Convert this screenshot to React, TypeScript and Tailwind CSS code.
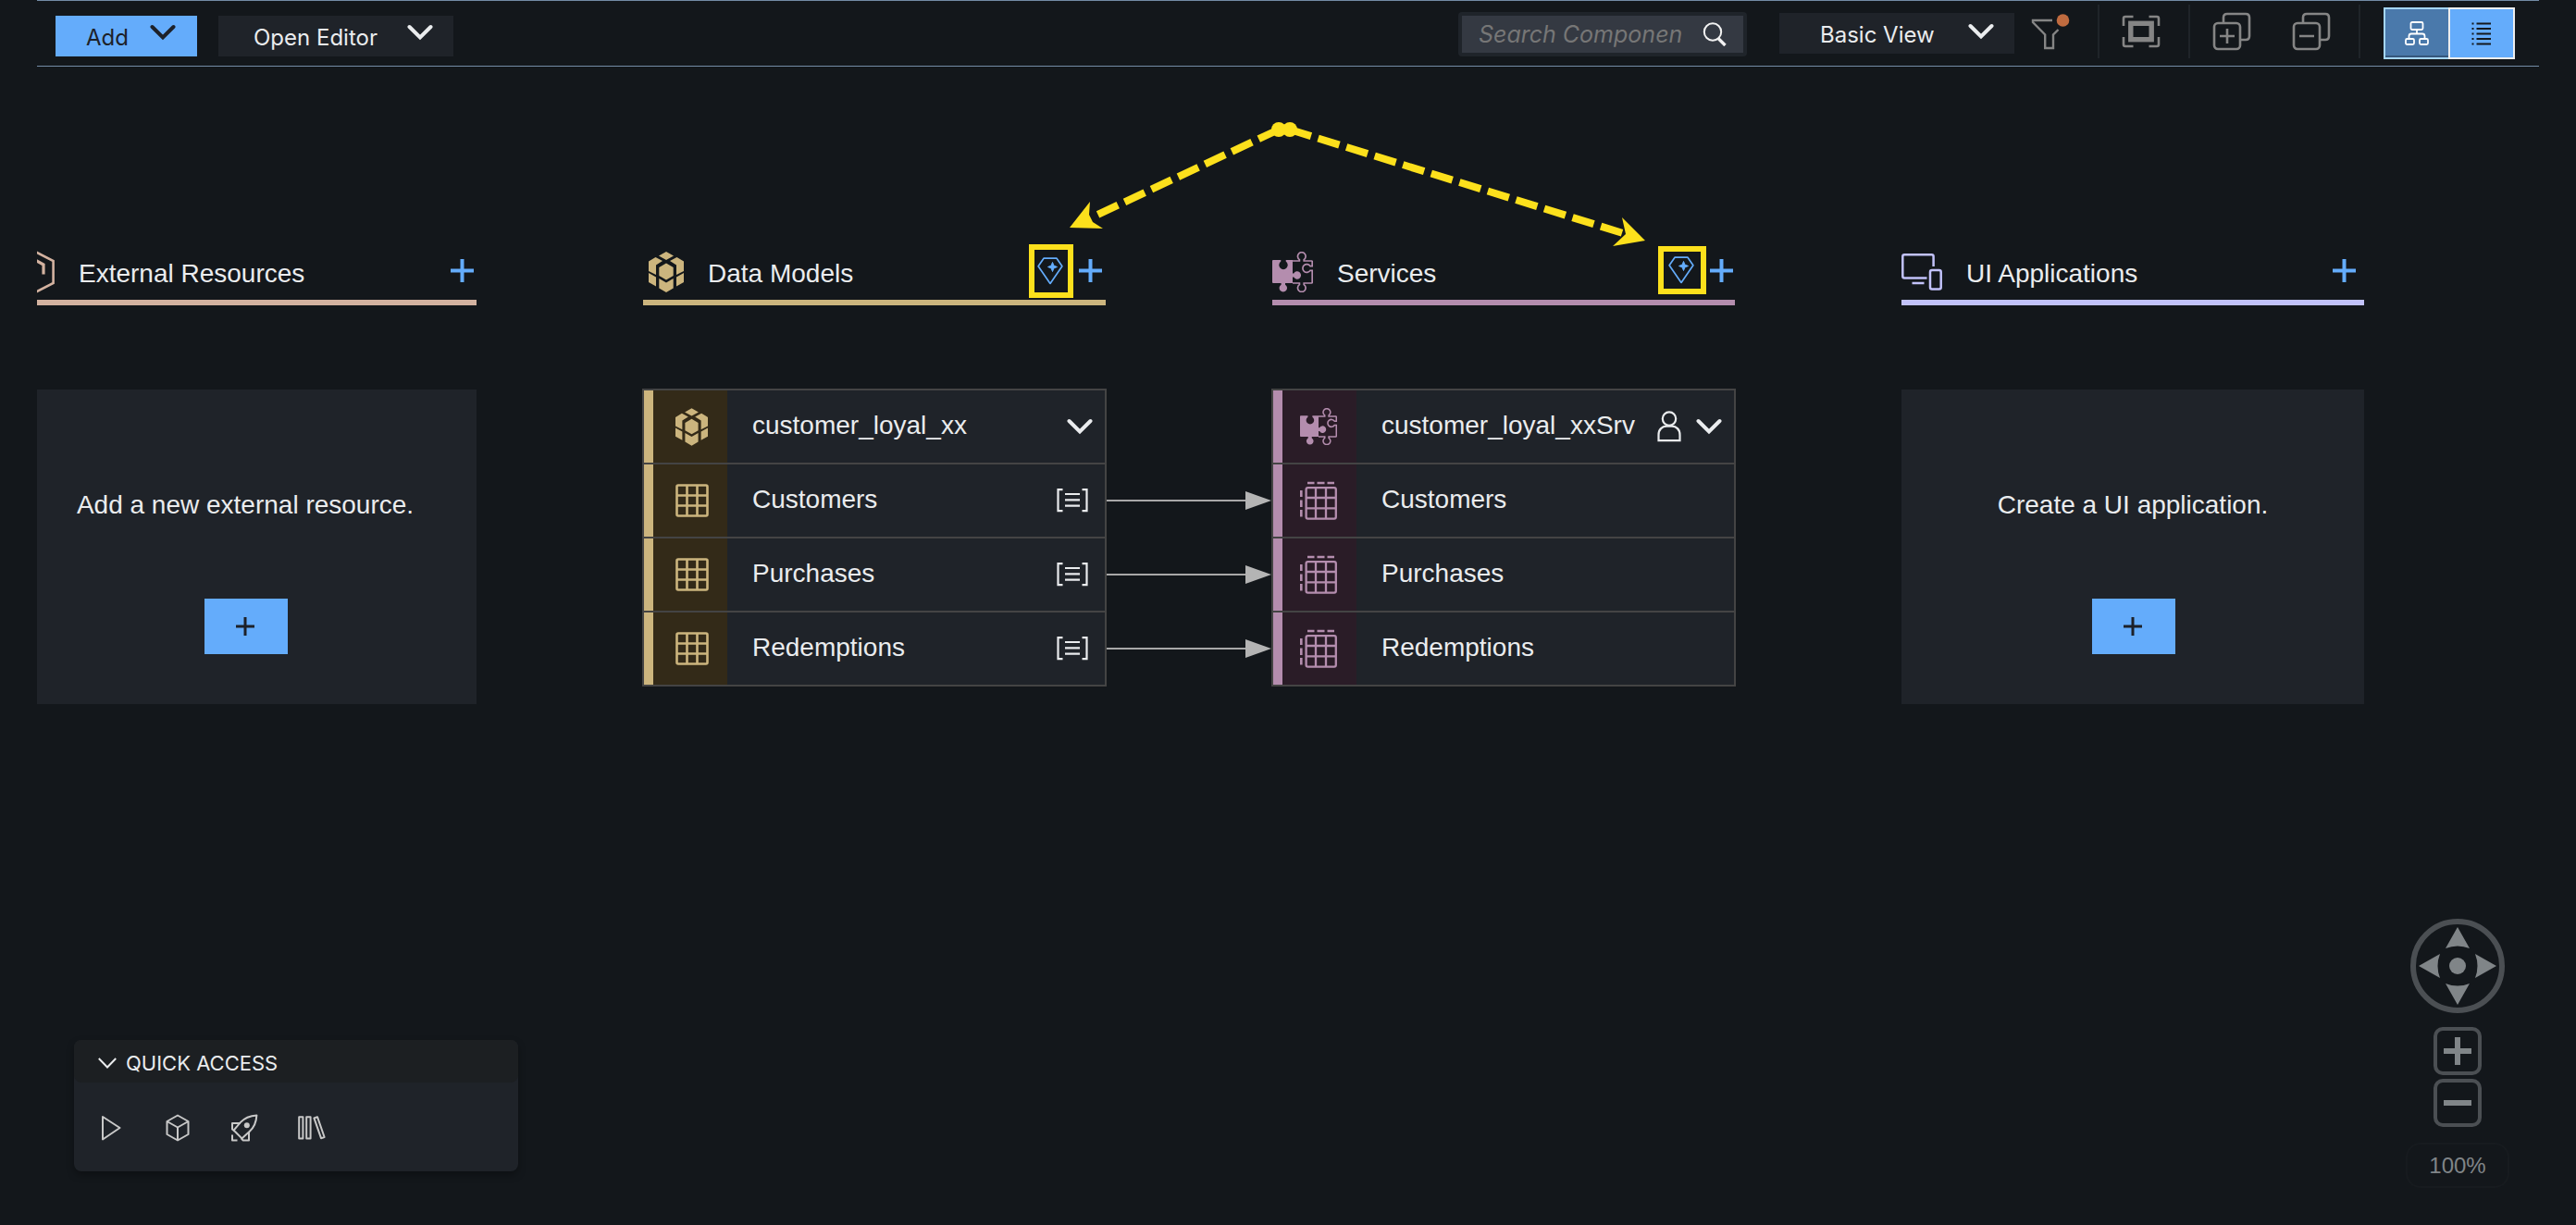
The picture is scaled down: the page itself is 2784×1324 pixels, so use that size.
import type { ReactNode } from 'react';

const ARIAL = "font-['Liberation_Sans',Arial,sans-serif]";

function Chevron({ className = '' }: { className?: string }) {
  return (
    <svg width="28" height="18" viewBox="0 0 28 18" fill="none" className={className} aria-hidden="true">
      <path d="M2.5 3 14 14.5 25.5 3" stroke="currentColor" strokeWidth="4" strokeLinecap="round" />
    </svg>
  );
}

function Plus({ size, weight }: { size: number; weight: number }) {
  return (
    <svg width={size} height={size} viewBox={`0 0 ${size} ${size}`} aria-hidden="true">
      <path d={`M${size / 2} 0V${size}M0 ${size / 2}H${size}`} stroke="currentColor" strokeWidth={weight} />
    </svg>
  );
}

function HexCluster({ width, height }: { width: number; height: number }) {
  return (
    <svg width={width} height={height} viewBox="0 0 38 44" fill="currentColor" aria-hidden="true">
      <path d="M19 0 27 4.5 19 9 11 4.5Z" />
      <path d="M0 10.5 7.5 6 15 10 8 14.5V25L0 21Z" />
      <path d="M38 10.5 30.5 6 23 10 30 14.5V25L38 21Z" />
      <path d="M19 12.5 26.7 17V26L19 30.5 11.3 26V17Z" />
      <path d="M0 23 8 27.5V37.5L0 33Z" />
      <path d="M38 23 30 27.5V37.5L38 33Z" />
      <path d="M11.3 29 19 33.5 26.7 29V39.5L19 44 11.3 39.5Z" />
    </svg>
  );
}

function Puzzle({ size }: { size: number }) {
  return (
    <svg width={size} height={size} viewBox="0 0 44 44" aria-hidden="true">
      <path
        d="M1 9H9.3V10.6A4.7 4.7 0 1 0 14.7 10.6V9H22V23.4H23.2A4.2 4.2 0 1 1 23.2 27.6H22V34H14V35.7A4.2 4.2 0 1 1 9.6 35.7V34H1Q0 34 0 33V10Q0 9 1 9Z"
        fill="currentColor"
      />
      <path
        d="M22 10H29.4V8.6A4.3 4.3 0 1 1 34.2 8.6V10H42.5Q43.2 10 43.2 10.8V15.6H41A4.4 4.4 0 1 0 41 20.4H43.2V33.2Q43.2 34 42.5 34H34.2V35.6A4.3 4.3 0 1 1 29.4 35.6V34H22"
        fill="none"
        stroke="currentColor"
        strokeWidth="1.7"
      />
    </svg>
  );
}

function HexOutline() {
  return (
    <svg width="44" height="48" viewBox="0 0 44 48" fill="none" stroke="currentColor" aria-hidden="true">
      <path d="M22 1.5 42.6 12V36L22 46.5 1.4 36V12Z" strokeWidth="2.6" />
      <path d="M32 26.5V16L22 10.5 12 16V26.5" strokeWidth="3.2" />
    </svg>
  );
}

function Devices() {
  return (
    <svg width="44" height="40" viewBox="0 0 44 40" fill="none" stroke="currentColor" strokeWidth="2.5" aria-hidden="true">
      <path d="M34.6 14V3.2Q34.6 1.3 32.6 1.3H3.2Q1.3 1.3 1.3 3.2V24.6Q1.3 26.6 3.2 26.6H27.5M11.5 32H24.5" />
      <rect x="31" y="18" width="11.7" height="20.6" rx="2" />
    </svg>
  );
}

function Diamond() {
  return (
    <svg width="28" height="30" viewBox="0 0 28 30" aria-hidden="true">
      <path d="M7 1.2H21L26.9 9.8 14 28.4 1.1 9.8Z" fill="none" stroke="currentColor" strokeWidth="1.7" strokeLinejoin="round" />
      <path d="M16.5 5.5 17.9 9.1 21.5 10.5 17.9 11.9 16.5 15.5 15.1 11.9 11.5 10.5 15.1 9.1Z" fill="currentColor" stroke="currentColor" strokeWidth="1" />
    </svg>
  );
}

function TableGrid() {
  return (
    <svg width="36" height="36" viewBox="0 0 36 36" fill="none" stroke="currentColor" strokeWidth="2.6" aria-hidden="true">
      <rect x="1.5" y="1.5" width="33" height="33" rx="1.5" />
      <path d="M12.5 1.5V34.5M23.5 1.5V34.5M1.5 12.5H34.5M1.5 23.5H34.5" />
    </svg>
  );
}

function ProjectionGrid() {
  return (
    <svg width="40" height="42" viewBox="0 0 40 42" fill="none" stroke="currentColor" strokeWidth="2.3" aria-hidden="true">
      <rect x="6.6" y="7.2" width="32.2" height="33.4" rx="1.8" />
      <path d="M17 7V40.5M28 7V40.5M6 18H39M6 29.3H39" />
      <path d="M8 2H15.5M18.5 2H26.5M29.5 2H37" strokeWidth="2.6" />
      <path d="M1.3 10V17M1.3 20.5V28M1.3 31V38.5" strokeWidth="2.6" />
    </svg>
  );
}

function ListBrackets() {
  return (
    <svg width="34" height="26" viewBox="0 0 34 26" fill="none" stroke="currentColor" aria-hidden="true">
      <path d="M6.5 1.2H1.5V24.2H6.5M27.5 1.2H32.5V24.2H27.5" strokeWidth="2.2" />
      <path d="M9 6H25M9 12.4H25M9 18.6H25" strokeWidth="2.2" />
    </svg>
  );
}

function Person() {
  return (
    <svg width="26" height="34" viewBox="0 0 26 34" fill="none" stroke="currentColor" strokeWidth="2.2" aria-hidden="true">
      <ellipse cx="13" cy="8.6" rx="7.2" ry="7.2" />
      <path d="M1.5 32.2V26C1.5 20 5.5 16.8 10 16.6H16C20.5 16.8 24.5 20 24.5 26V32.2Z" />
    </svg>
  );
}

function Divider({ className = '' }: { className?: string }) {
  return <span className={`h-[58px] w-0.5 bg-[#1f2429] ${className}`} />;
}

function Toolbar() {
  return (
    <header className="mx-10 flex h-[72px] items-start border-y border-[#738ba6] font-[Inter,sans-serif] text-2xl text-[#eaecee]">
      <button className="mt-4 ml-5 flex h-11 w-[153px] items-center justify-between bg-[#64acfb] pt-1 pr-[23px] pl-[33px] text-[#1d2129]">
        Add
        <Chevron className="mb-3" />
      </button>
      <button className="mt-4 ml-[23px] flex h-11 w-[254px] items-center justify-between bg-[#1f2329] pt-1 pr-[22px] pl-[38px]">
        Open Editor
        <Chevron className="mb-3" />
      </button>

      <div className="ml-auto flex items-start">
        <label className="mt-3 flex h-12 w-[312px] items-center rounded-sm border-4 border-[#1f242a] bg-[#343942] pl-[18px]">
          <input
            type="text"
            aria-label="Search components"
            placeholder="Search Componen"
            className="w-[234px] bg-transparent pt-0.5 text-[25px] italic outline-none placeholder:text-[#767676]"
          />
          <svg width="26" height="26" viewBox="0 0 26 26" fill="none" stroke="#f2f2f2" className="ml-2 shrink-0" aria-hidden="true">
            <circle cx="11" cy="10.5" r="9.2" strokeWidth="2" />
            <path d="M17 17.5 24.5 25" strokeWidth="3.4" />
          </svg>
        </label>

        <div className="relative mt-[13px] ml-[35px] h-11 w-[254px] bg-[#1f2329]">
          <select aria-label="View" className="h-full w-full appearance-none bg-transparent pt-1 pl-[44px] outline-none">
            <option>Basic View</option>
          </select>
          <Chevron className="pointer-events-none absolute top-[11px] right-[22px]" />
        </div>

        <button aria-label="Filter" className="mt-3.5 ml-[18px] text-[#858585]">
          <svg width="42" height="40" viewBox="0 0 42 40" fill="none" stroke="currentColor" strokeWidth="2.4" aria-hidden="true">
            <path d="M23 7H2V9L15.2 22.5V37H24V22.5L29.5 17" />
            <circle cx="34.5" cy="7" r="6.8" fill="#c06b3f" stroke="none" />
          </svg>
        </button>
        <div className="mt-1 ml-[30px] flex items-start">
          <Divider />
          <button aria-label="Fit to window" className="mt-[11px] ml-6 text-[#858585]">
            <svg width="42" height="36" viewBox="0 0 42 36" fill="none" stroke="currentColor" aria-hidden="true">
              <path d="M12.5 2H4Q2 2 2 4V12M29.5 2H38Q40 2 40 4V12M12.5 34H4Q2 34 2 32V24M29.5 34H38Q40 34 40 32V24" strokeWidth="2.6" />
              <rect x="9.8" y="9.3" width="22.4" height="17.4" strokeWidth="5.4" />
            </svg>
          </button>
          <Divider className="ml-[30px]" />
          <button aria-label="Expand all" className="mt-2 ml-6 text-[#858585]">
            <svg width="42" height="42" viewBox="0 0 42 42" fill="none" stroke="currentColor" strokeWidth="2.6" aria-hidden="true">
              <rect x="2" y="12" width="28" height="28" rx="4" />
              <path d="M12 11V6Q12 2 16 2H36Q40 2 40 6V26Q40 30 36 30H31M16 18V34M8 26H24" />
            </svg>
          </button>
          <button aria-label="Collapse all" className="mt-2 ml-11 text-[#858585]">
            <svg width="42" height="42" viewBox="0 0 42 42" fill="none" stroke="currentColor" strokeWidth="2.6" aria-hidden="true">
              <rect x="2" y="12" width="28" height="28" rx="4" />
              <path d="M12 11V6Q12 2 16 2H36Q40 2 40 6V26Q40 30 36 30H31M8 26H24" />
            </svg>
          </button>
          <Divider className="ml-[30px]" />
        </div>
        <div className="mt-[7px] mr-[26px] ml-[25px] flex h-14">
          <button aria-label="Graph view" className="flex w-[70px] items-center justify-center border-2 border-r-0 border-[#a5d6f8] bg-[#4a79ab] text-white shadow-[inset_0_-2px_0_#35577c]">
            <svg width="26" height="26" viewBox="0 0 26 26" fill="none" stroke="currentColor" strokeWidth="1.8" aria-hidden="true">
              <rect x="6.5" y="1" width="13" height="8" rx="1.5" />
              <rect x="1" y="19" width="9" height="6" rx="1.5" />
              <rect x="16" y="19" width="9" height="6" rx="1.5" />
              <path d="M13 9V13.5M4.5 19V16Q4.5 13.5 7 13.5H19Q21.5 13.5 21.5 16V19" />
            </svg>
          </button>
          <button aria-label="List view" className="flex w-[72px] items-center justify-center border-2 border-[#eeeeee] bg-[#64acfb] text-[#14181d]">
            <svg width="22" height="26" viewBox="0 0 22 26" fill="none" stroke="currentColor" strokeWidth="2" aria-hidden="true">
              <path d="M5.5 2.5H21M5.5 8H21M5.5 13.5H21M5.5 19H21M5.5 24.5H21" />
              <path d="M.5 2.5H2.5M.5 8H2.5M.5 13.5H2.5M.5 19H2.5M.5 24.5H2.5" />
            </svg>
          </button>
        </div>
      </div>
    </header>
  );
}

function ColumnHeader({ title, icon, tone, actions }: { title: string; icon: ReactNode; tone: string; actions: ReactNode }) {
  return (
    <div className={`flex h-[72px] items-start border-b-6 ${tone}`}>
      <div className="flex h-[72px] w-[70px] items-center">{icon}</div>
      <h2 className="mt-[22px] leading-8 text-[#eaecee]">{title}</h2>
      <div className="ml-auto flex h-[72px] items-center pb-[3px] text-[#64acfb]">{actions}</div>
    </div>
  );
}

function EmptyCard({ text, label }: { text: string; label: string }) {
  return (
    <div className="mt-[91px] flex h-[340px] flex-col items-center bg-[#1f2329]">
      <p className="mt-[109px] leading-8">{text}</p>
      <button aria-label={label} className="mt-[85px] ml-0.5 flex h-[60px] w-[90px] items-center justify-center bg-[#64acfb] pr-0.5 text-[#1d2129]">
        <Plus size={20} weight={3} />
      </button>
    </div>
  );
}

function EntityRow({ name, icon, bar, cell, trailing, linked }: {
  name: string; icon: ReactNode; bar: string; cell: string; trailing?: ReactNode; linked?: boolean;
}) {
  return (
    <li className="relative flex h-20 border-b-2 border-[#444444] bg-[#1f2329]">
      <span className={`w-2.5 ${bar}`} />
      <span className={`flex w-20 items-center justify-center ${cell}`}>{icon}</span>
      <span className="ml-[27px] self-center pb-0.5 leading-8">{name}</span>
      <span className="ml-auto flex items-center gap-4 pr-[13px]">{trailing}</span>
      {linked && (
        <svg width="178" height="22" viewBox="0 0 178 22" className="absolute top-7 left-full ml-0.5" aria-hidden="true">
          <path d="M0 11H151" stroke="#a8a8a8" strokeWidth="2" />
          <path d="M150 1 178 11 150 21Z" fill="#b4b4b4" />
        </svg>
      )}
    </li>
  );
}

const ENTITIES = ['Customers', 'Purchases', 'Redemptions'];

function Annotation() {
  return (
    <svg width="630" height="140" viewBox="1152 130 630 140" className="pointer-events-none absolute top-[130px] left-[1152px]" aria-hidden="true">
      <g fill="#fce01c" stroke="none">
        <circle cx="1382" cy="140" r="8" />
        <circle cx="1394" cy="140" r="8" />
        <path d="M1156 246 1178 218 1177 232 1181 240 1192 247Z" />
        <path d="M1778 260 1753 235 1757 253 1743 266Z" />
      </g>
      <g stroke="#fce01c" strokeWidth="8" strokeDasharray="24 8">
        <path d="M1382 140 1180 235" />
        <path d="M1394 140 1754 252" />
      </g>
    </svg>
  );
}

function Navigator() {
  return (
    <div className="absolute right-[72px] bottom-10 flex w-28 flex-col items-center text-[#808588]">
      <svg width="102" height="102" viewBox="-51 -51 102 102" role="img" aria-label="Pan">
        <circle r="48" fill="none" stroke="#4b4f53" strokeWidth="6" />
        <circle r="9" fill="currentColor" />
        <g fill="currentColor">
          <path d="M0-42 13-19Q0-24 -13-19Z" />
          <path d="M0 42 13 19Q0 24 -13 19Z" />
          <path d="M-42 0-19 13Q-24 0 -19-13Z" />
          <path d="M42 0 19 13Q24 0 19-13Z" />
        </g>
      </svg>
      <button aria-label="Zoom in" className="mt-[15px] flex size-[52px] items-center justify-center rounded-[10px] border-4 border-[#4b4f53]">
        <Plus size={30} weight={6} />
      </button>
      <button aria-label="Zoom out" className="mt-1 flex size-[52px] items-center justify-center rounded-[10px] border-4 border-[#4b4f53]">
        <span className="h-1.5 w-[30px] bg-[#808588]" />
      </button>
      <span className={`mt-[17px] flex h-[49px] w-full items-center justify-center rounded-2xl border-2 border-[#171b1f] text-2xl ${ARIAL}`}>100%</span>
    </div>
  );
}

function QuickAccess() {
  return (
    <section className="absolute bottom-[58px] left-20 h-[142px] w-[480px] rounded-lg bg-[#1f2329] shadow-[0_4px_8px_rgba(0,0,0,0.3)]">
      <button className="flex h-[46px] w-full items-center rounded-lg bg-[#1c1f22] pt-1 pl-[26px] font-[Inter,sans-serif] text-[22px] text-[#eaecee]">
        <svg width="20" height="12" viewBox="0 0 20 12" fill="none" stroke="currentColor" strokeWidth="2" aria-hidden="true">
          <path d="M.8 1 10 10.5 19.2 1" />
        </svg>
        <span className="ml-2.5">QUICK ACCESS</span>
      </button>
      <div className="flex items-center pt-[34px] pl-[29px] text-[#c8c8c8]">
        <button aria-label="Run">
          <svg width="24" height="30" viewBox="0 0 24 30" fill="none" stroke="currentColor" strokeWidth="2" strokeLinejoin="round" aria-hidden="true">
            <path d="M2 3 20.5 15 2 27.5Z" />
          </svg>
        </button>
        <button aria-label="Build" className="ml-[46px]">
          <svg width="26" height="30" viewBox="0 0 26 30" fill="none" stroke="currentColor" strokeWidth="2" strokeLinejoin="round" aria-hidden="true">
            <path d="M13 1.5 24.5 8V22L13 28.5 1.5 22V8ZM1.5 8 13 14.5 24.5 8M13 14.5V28.5" />
          </svg>
        </button>
        <button aria-label="Deploy" className="ml-[44px]">
          <svg width="30" height="30" viewBox="0 0 30 30" fill="none" stroke="currentColor" strokeWidth="2" strokeLinejoin="round" aria-hidden="true">
            <path d="M28.4 1.4C21 1.8 15 4.5 10.8 9.2L3.6 17.6 12.4 26.4 20.6 19C25.4 14.8 28 9 28.4 1.4Z" />
            <path d="M11 10H2V16.5L4.5 18.5M20 19V28.4H13.5L11.5 26M2 22.5V28.4H7.5" />
            <circle cx="17.8" cy="12.2" r="3" fill="currentColor" stroke="none" />
          </svg>
        </button>
        <button aria-label="Library" className="ml-[42px]">
          <svg width="32" height="30" viewBox="0 0 32 30" fill="none" stroke="currentColor" strokeWidth="2" strokeLinejoin="round" aria-hidden="true">
            <path d="M2.2 3.2H6.4V26.4H2.2ZM10.2 3.2H14.6V26.4H10.2ZM18.4 4.4 22 3.2 29.6 25 26 26.2Z" />
          </svg>
        </button>
      </div>
    </section>
  );
}

export default function App() {
  return (
    <div className={`relative flex min-h-screen flex-col overflow-hidden bg-[#13171b] text-[28px] text-[#eaecee] ${ARIAL}`}>
      <Toolbar />

      <main className="mx-10 overflow-hidden">
        <div className="-ml-[25px] grid grid-cols-4 gap-x-[180px] pt-[186px] pr-[189px] pb-10">
          <section>
            <ColumnHeader
              title="External Resources"
              tone="border-[#d3b2a0] text-[#d3b2a0]"
              icon={<HexOutline />}
              actions={<button aria-label="Add external resource" className="mr-[3px]"><Plus size={25} weight={4} /></button>}
            />
            <EmptyCard text="Add a new external resource." label="Add a new external resource" />
          </section>

          <section>
            <ColumnHeader
              title="Data Models"
              tone="border-[#ccb57e] text-[#ccb57e]"
              icon={<span className="pl-1.5"><HexCluster width={38} height={44} /></span>}
              actions={
                <>
                  <button aria-label="Generate data model" className="flex h-[58px] w-12 items-center justify-center border-6 border-[#fce01c] pr-[3px]"><Diamond /></button>
                  <button aria-label="Add data model" className="mr-1 ml-1.5"><Plus size={25} weight={4} /></button>
                </>
              }
            />
            <ul className="-mx-px mt-[90px] border-2 border-b-0 border-[#444444]">
              <EntityRow name="customer_loyal_xx" bar="bg-[#ccb57e]" cell="bg-[#332a18] pl-[3px] text-[#ccb57e]"
                icon={<HexCluster width={35} height={41} />}
                trailing={<button aria-label="Collapse customer_loyal_xx"><Chevron /></button>} />
              {ENTITIES.map((name) => (
                <EntityRow key={name} name={name} bar="bg-[#ccb57e]" cell="bg-[#332a18] pl-[3px] text-[#ccb57e]" linked
                  icon={<TableGrid />}
                  trailing={<span className="pr-[5px]"><ListBrackets /></span>} />
              ))}
            </ul>
          </section>

          <section>
            <ColumnHeader
              title="Services"
              tone="border-[#b48dae] text-[#b48dae]"
              icon={<Puzzle size={44} />}
              actions={
                <>
                  <button aria-label="Generate service" className="mb-0.5 flex h-[52px] w-[52px] items-center justify-center border-6 border-[#fce01c] pr-[3px]"><Diamond /></button>
                  <button aria-label="Add service" className="mr-0.5 ml-1"><Plus size={25} weight={4} /></button>
                </>
              }
            />
            <ul className="-mx-px mt-[90px] border-2 border-b-0 border-[#444444]">
              <EntityRow name="customer_loyal_xxSrv" bar="bg-[#b48dae]" cell="bg-[#2a1c27] pr-0.5 text-[#b48dae]"
                icon={<Puzzle size={40} />}
                trailing={<><Person /><button aria-label="Collapse customer_loyal_xxSrv"><Chevron /></button></>} />
              {ENTITIES.map((name) => (
                <EntityRow key={name} name={name} bar="bg-[#b48dae]" cell="bg-[#2a1c27] pr-0.5 text-[#b48dae]" icon={<ProjectionGrid />} />
              ))}
            </ul>
          </section>

          <section>
            <ColumnHeader
              title="UI Applications"
              tone="border-[#c2c2fa] text-[#c2c2fa]"
              icon={<Devices />}
              actions={<button aria-label="Add UI application" className="mr-[9px]"><Plus size={25} weight={4} /></button>}
            />
            <EmptyCard text="Create a UI application." label="Create a UI application" />
          </section>
        </div>
      </main>

      <Annotation />
      <QuickAccess />
      <Navigator />
    </div>
  );
}
